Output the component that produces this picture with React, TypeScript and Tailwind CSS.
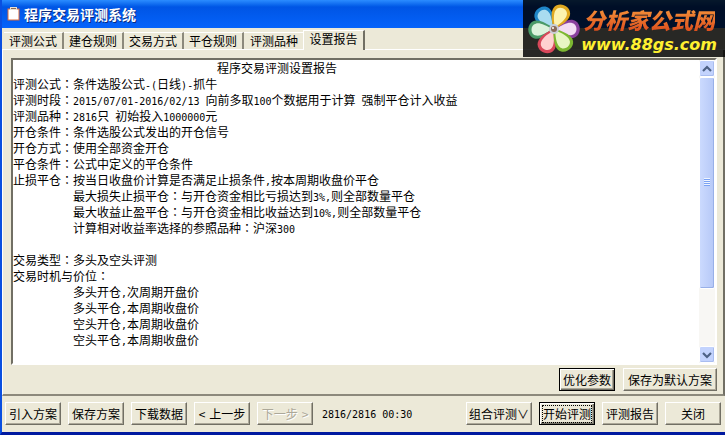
import { useRef, useState } from "react"
import type { ReactNode } from "react"
import clsx from "clsx"

const TABS = ["评测公式", "建仓规则", "交易方式", "平仓规则", "评测品种", "设置报告"]

// Indents are ideographic spaces, so they always line up with the Chinese text
const REPORT = [
  "　　　　　　　　　　　　　　　　　程序交易评测设置报告",
  "评测公式：条件选股公式-(日线)-抓牛",
  "评测时段：2015/07/01-2016/02/13 向前多取100个数据用于计算 强制平仓计入收益",
  "评测品种：2816只 初始投入1000000元",
  "开仓条件：条件选股公式发出的开仓信号",
  "开仓方式：使用全部资金开仓",
  "平仓条件：公式中定义的平仓条件",
  "止损平仓：按当日收盘价计算是否满足止损条件,按本周期收盘价平仓",
  "　　　　　最大损失止损平仓：与开仓资金相比亏损达到3%,则全部数量平仓",
  "　　　　　最大收益止盈平仓：与开仓资金相比收益达到10%,则全部数量平仓",
  "　　　　　计算相对收益率选择的参照品种：沪深300",
  "",
  "交易类型：多头及空头评测",
  "交易时机与价位：",
  "　　　　　多头开仓,次周期开盘价",
  "　　　　　多头平仓,本周期收盘价",
  "　　　　　空头开仓,本周期收盘价",
  "　　　　　空头平仓,本周期收盘价",
]

// Half-width characters take half a Chinese cell, the full-width colon sits mid-cell
function CellText({ text }: { text: string }) {
  return (
    <>
      {text.split(/([\x20-\x7e]+|：)/).map((part, i) => {
        if (part === "：") {
          return (
            <span key={i} lang="zh-TW" className="font-['Noto_Sans_CJK_TC',sans-serif]">
              {part}
            </span>
          )
        }
        if (/^[\x20-\x7e]/.test(part)) {
          return (
            <span key={i} className="font-['DejaVu_Sans_Mono',monospace] text-[10px]">
              {part}
            </span>
          )
        }
        return part
      })}
    </>
  )
}

interface PushButtonProps {
  children: ReactNode
  isDefault?: boolean
  focused?: boolean
  disabled?: boolean
  width?: string
  onClick?: () => void
}

function PushButton({ children, isDefault, focused, disabled, width = "w-14", onClick }: PushButtonProps) {
  return (
    <button
      type="button"
      disabled={disabled}
      onClick={onClick}
      className={clsx(
        "flex h-[23px] shrink-0 items-center justify-center gap-1 border bg-[#ece9d8] whitespace-nowrap",
        width,
        isDefault
          ? "border-black shadow-[inset_1px_1px_0_#fff,inset_-1px_-1px_0_#716f64,inset_-2px_-2px_0_#aca899]"
          : "border-t-white border-l-white border-r-[#716f64] border-b-[#716f64] shadow-[inset_-1px_-1px_0_#aca899]",
        disabled && "text-[#aca899] [text-shadow:1px_1px_0_#fff]",
      )}
    >
      {focused ? <span className="outline-1 outline-dotted outline-black">{children}</span> : children}
    </button>
  )
}

function ArrowButton({ label, up, onClick }: { label: string; up?: boolean; onClick: () => void }) {
  return (
    <button
      type="button"
      aria-label={label}
      onClick={onClick}
      className="flex h-[17px] w-4 shrink-0 items-center justify-center rounded-xs border border-white bg-[#c3d3fd] shadow-[inset_-1px_-1px_0_#a9bdf0]"
    >
      <svg width="10" height="8" viewBox="0 0 10 8" fill="none" stroke="#4d6185" strokeWidth="2.2">
        <path d={up ? "M1 6 5 2 9 6" : "M1 2 5 6 9 2"} />
      </svg>
    </button>
  )
}

function Flower() {
  const petals = [
    { angle: 322, outer: "#1f86c8", inner: "#a9dcf0" },
    { angle: 268, outer: "#4a9a68", inner: "#dcf2dc" },
    { angle: 90, outer: "#8a3f9e", inner: "#f3dcf4" },
    { angle: 205, outer: "#d8485a", inner: "#ffd0d0" },
    { angle: 144, outer: "#7db832", inner: "#e8f6c4" },
    { angle: 24, outer: "#e0a820", inner: "#fdf3b0" },
  ]
  return (
    <svg width="54" height="54" viewBox="0 0 54 54" aria-hidden="true">
      {petals.map((p) => (
        <g key={p.angle} transform={`rotate(${p.angle} 27 27)`}>
          <path d="M27 28C22 21 17 14 18 8C20 -1 34 -1 36 8C37 14 32 21 27 28Z" fill={p.outer} />
          <path d="M27 25C23 19 20 13 21 9C22 3 32 3 33 9C34 13 31 19 27 25Z" fill={p.inner} />
        </g>
      ))}
      <circle cx="27" cy="27" r="5" fill="#c9cdd6" />
      <circle cx="27" cy="27" r="3" fill="#8a6a58" />
      <circle cx="26" cy="26" r="1" fill="#fff" />
    </svg>
  )
}

export default function App() {
  const [activeTab, setActiveTab] = useState(5)
  const reportRef = useRef<HTMLPreElement>(null)

  const scrollReport = (lines: number) => {
    reportRef.current?.scrollBy({ top: lines * 16 })
  }

  return (
    <div
      lang="zh-CN"
      className="relative flex min-h-screen flex-col border-b-3 border-l-2 border-b-[#0019a0] border-l-[#0a4fe0] bg-[#ece9d8] font-['Noto_Sans_CJK_SC',sans-serif] text-xs text-black"
    >
      {/* Title bar */}
      <header className="flex h-7 items-center gap-1 bg-linear-to-b from-[#2b8cff] via-[#0055e5] via-25% to-[#0563fb] px-[5px]">
        <svg width="13" height="14" viewBox="0 0 13 14" aria-hidden="true">
          <rect x="1" y="2" width="11" height="11" fill="#fff" stroke="#d8683c" />
          <path d="M3 0h7v3H3z" fill="#e8e0d0" />
          <path d="M4 1h5v1H4z" fill="#8c6a58" />
        </svg>
        <h1 className="text-sm font-bold text-white [text-shadow:1px_1px_0_#0a2a80]">程序交易评测系统</h1>
      </header>

      {/* Tabs */}
      <div role="tablist" className="mt-0.5 flex h-5 items-end border-b border-white pl-0.5">
        {TABS.map((tab, i) => (
          <button
            key={tab}
            type="button"
            role="tab"
            aria-selected={i === activeTab}
            onClick={() => setActiveTab(i)}
            className={clsx(
              "shrink-0 border-t border-t-white",
              i === activeTab
                ? "-mb-px -ml-px h-5 w-[62px] border-r-2 border-l border-r-[#716f64] border-l-white bg-[#ece9d8] pb-1 leading-4"
                : "h-[17px] w-15 leading-4",
              i < activeTab - 1 && "border-r-2 border-r-[#8c897c]",
            )}
          >
            {tab}
          </button>
        ))}
      </div>

      <main className="flex flex-1 flex-col border-r-2 border-b-2 border-l border-r-[#716f64] border-b-[#8c897c] border-l-white pt-2 pr-1.5 pb-[3px] pl-2">
        <div className="flex flex-1 border-2 border-t-[#716f64] border-r-white border-b-white border-l-[#716f64] bg-white">
          <pre
            ref={reportRef}
            tabIndex={0}
            aria-label="设置报告"
            className="flex-1 overflow-hidden font-['Noto_Sans_CJK_SC',sans-serif] leading-4 outline-none"
          >
            {REPORT.map((line, i) => (
              <div key={i} className="h-4">
                <CellText text={line} />
              </div>
            ))}
          </pre>
          <div className="flex w-4 flex-col bg-[#f8f7f4]">
            <ArrowButton label="向上滚动" up onClick={() => scrollReport(-1)} />
            <div className="flex flex-1 flex-col">
              <div className="flex flex-[11] flex-col items-center justify-center gap-px rounded-xs border border-white bg-linear-to-r from-[#cbdafe] to-[#b6c8f7] shadow-[inset_-1px_-1px_0_#98b0e8]">
                {[0, 1, 2, 3].map((n) => (
                  <span key={n} className="h-px w-1.5 bg-[#7aa2f4] shadow-[0_-1px_0_#eef4fe]" />
                ))}
              </div>
              <div className="flex-[3]" />
            </div>
            <ArrowButton label="向下滚动" onClick={() => scrollReport(1)} />
          </div>
        </div>
        <div className="mt-[3px] flex justify-end gap-2">
          <PushButton isDefault>优化参数</PushButton>
          <PushButton width="px-1">保存为默认方案</PushButton>
        </div>
      </main>

      {/* Command bar */}
      <footer className="flex items-center gap-[7px] pt-1.5 pr-1 pb-[7px] pl-[3px]">
        <PushButton>引入方案</PushButton>
        <PushButton>保存方案</PushButton>
        <PushButton>下载数据</PushButton>
        <PushButton>
          <span>&lt;</span>
          <span>上一步</span>
        </PushButton>
        <PushButton disabled>
          <span>下一步</span>
          <span>&gt;</span>
        </PushButton>
        <output className="ml-0.5 flex-1 whitespace-nowrap">
          <CellText text="2816/2816 00:30" />
        </output>
        <PushButton width="px-0.5">组合评测∨</PushButton>
        <PushButton isDefault focused>
          开始评测
        </PushButton>
        <PushButton>评测报告</PushButton>
        <PushButton>关闭</PushButton>
      </footer>

      {/* Site badge over the title bar */}
      <a href="#" className="absolute top-0 right-0 flex h-[57px] items-center bg-black/83 pr-2 pl-1">
        <Flower />
        <span className="flex flex-col items-center">
          <span className="bg-linear-to-b from-[#f8a040] to-[#d84018] bg-clip-text text-[22px] leading-8 font-black text-transparent italic">
            分析家公式网
          </span>
          <span className="font-['DejaVu_Sans',sans-serif] text-base leading-5 font-bold text-[#fff030] italic">
            www.88gs.com
          </span>
        </span>
      </a>
    </div>
  )
}
